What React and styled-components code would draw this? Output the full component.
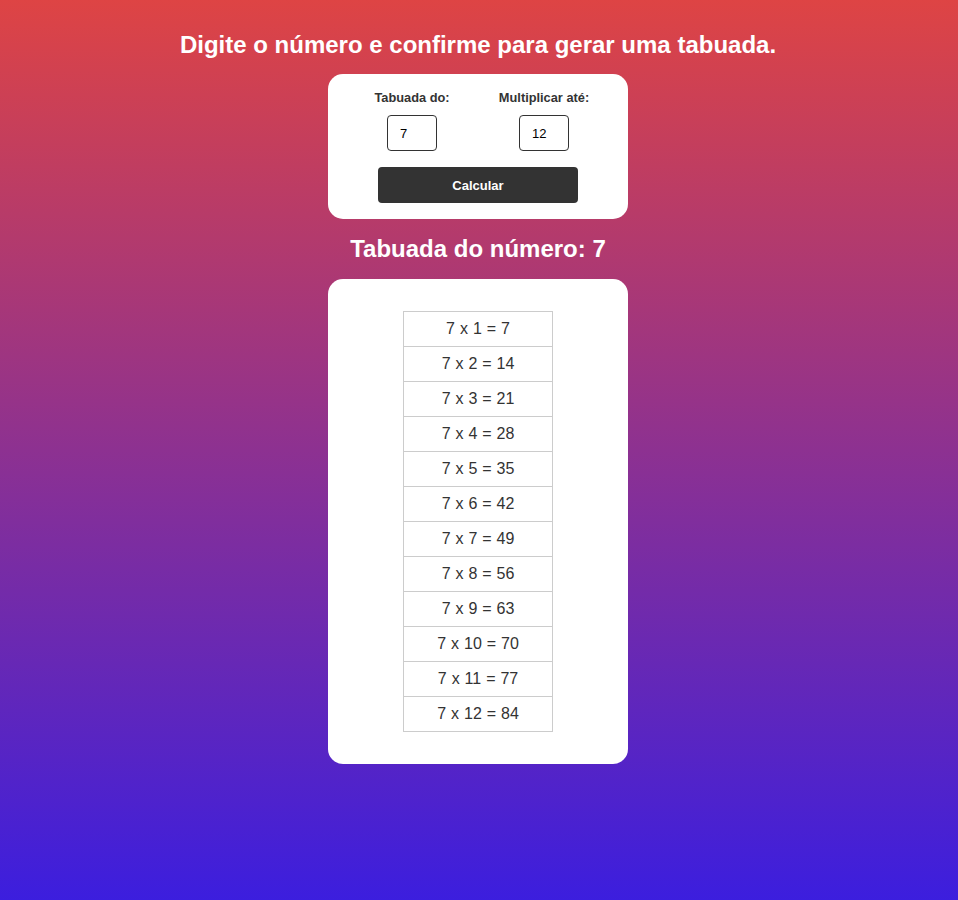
import React from "react";
import styled, { createGlobalStyle } from "styled-components";

const Global = createGlobalStyle`
  html, body { margin: 0; padding: 0; }
  body {
    min-height: 900px;
    background: linear-gradient(to bottom, rgb(222, 68, 68), rgb(60, 30, 222));
    font-family: "Liberation Sans", Arial, sans-serif;
  }
`;

const Page = styled.main`
  display: flex;
  flex-direction: column;
  align-items: center;
  padding: 31px 2px 0 0;
  min-height: 869px;
`;

const Title = styled.h1`
  margin: 0 0 15px;
  font-size: 24px;
  line-height: 28px;
  font-weight: bold;
  color: #fff;
  text-align: center;
`;

const Subtitle = styled.h2`
  margin: 16px 0 16px;
  font-size: 24px;
  line-height: 28px;
  font-weight: bold;
  color: #fff;
`;

const Card = styled.section`
  box-sizing: border-box;
  width: 300px;
  background: #fff;
  border-radius: 15px;
  padding: ${(p) => p.$pad};
  display: flex;
  flex-direction: column;
  align-items: center;
`;

const Fields = styled.div`
  display: grid;
  grid-template-columns: 100px 100px;
  column-gap: 32px;
`;

const Field = styled.label`
  display: flex;
  flex-direction: column;
  align-items: center;
  gap: 10px;
  font-size: 12.8px;
  line-height: 15px;
  font-weight: bold;
  color: #333;
  white-space: nowrap;
`;

const Input = styled.input`
  box-sizing: border-box;
  width: 50px;
  height: 36px;
  border: 1px solid #333;
  border-radius: 4px;
  padding: 0 12px;
  font-family: "Liberation Sans", Arial, sans-serif;
  font-size: 13px;
  color: #000;
  outline: none;
`;

const Button = styled.button`
  margin-top: 16px;
  width: 200px;
  height: 36px;
  border: none;
  border-radius: 4px;
  background: #333;
  color: #fff;
  font-family: "Liberation Sans", Arial, sans-serif;
  font-size: 13px;
  font-weight: bold;
  cursor: pointer;
`;

const Table = styled.table`
  border-collapse: collapse;
  width: 150px;
`;

const Cell = styled.td`
  height: 34px;
  padding: 0;
  border: 1px solid #ccc;
  text-align: center;
  font-size: 16px;
  color: #333;
  word-spacing: 0.5px;
`;

export default function App() {
  const n = 7;
  const rows = Array.from({ length: 12 }, (_, i) => i + 1);
  return (
    <>
      <Global />
      <Page>
        <Title>Digite o número e confirme para gerar uma tabuada.</Title>
        <Card $pad="16px 0 16px">
          <Fields>
            <Field>
              Tabuada do:
              <Input defaultValue="7" />
            </Field>
            <Field>
              Multiplicar até:
              <Input defaultValue="12" />
            </Field>
          </Fields>
          <Button>Calcular</Button>
        </Card>
        <Subtitle>Tabuada do número: {n}</Subtitle>
        <Card $pad="32px 0 32px">
          <Table>
            <tbody>
              {rows.map((i) => (
                <tr key={i}>
                  <Cell>
                    {n} x {i} = {n * i}
                  </Cell>
                </tr>
              ))}
            </tbody>
          </Table>
        </Card>
      </Page>
    </>
  );
}
